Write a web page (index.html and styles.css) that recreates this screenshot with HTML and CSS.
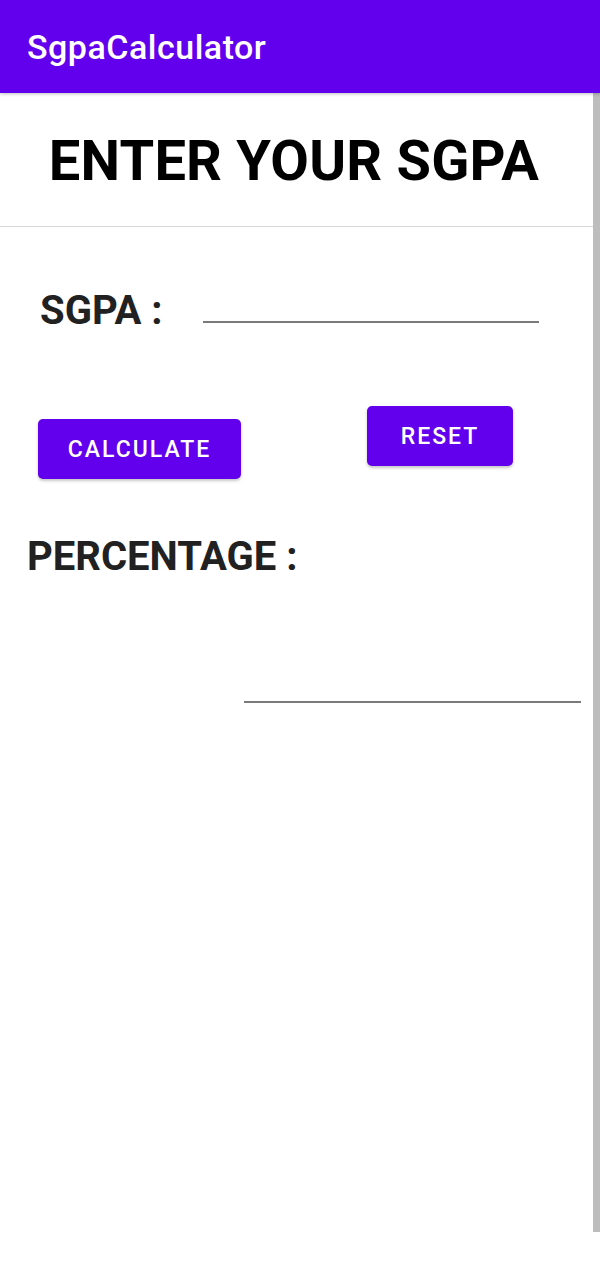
FILE: index.html
```html
<!DOCTYPE html>
<html lang="en">
<head>
<meta charset="utf-8">
<title>SgpaCalculator</title>
<link rel="stylesheet" href="styles.css">
</head>
<body>
<div class="screen">
  <header class="appbar">
    <h1 class="appbar-title">SgpaCalculator</h1>
  </header>
  <main class="content">
    <div class="scrollbar"></div>
    <section class="heading">
      <h2 class="heading-text">ENTER YOUR SGPA</h2>
    </section>
    <div class="sgpa-row">
      <label class="label">SGPA :</label>
      <div class="field"></div>
    </div>
    <div class="button-row">
      <button class="btn btn-calc">CALCULATE</button>
      <button class="btn btn-reset">RESET</button>
    </div>
    <div class="label label-percent">PERCENTAGE :</div>
    <div class="result"></div>
  </main>
</div>
</body>
</html>
```

FILE: styles.css
```css
* { box-sizing: border-box; }
html, body {
  margin: 0;
  padding: 0;
  background: #ffffff;
}
body {
  font-family: Roboto, "Liberation Sans", sans-serif;
  width: 600px;
  height: 1280px;
  overflow: hidden;
}
.screen {
  width: 600px;
  height: 1280px;
  display: flex;
  flex-direction: column;
}
.appbar {
  height: 93px;
  background: #6200ee;
  display: flex;
  align-items: center;
  padding-left: 27px;
  box-shadow: 0 1px 3px rgba(0, 0, 0, 0.25);
  position: relative;
  z-index: 2;
}
.appbar-title {
  margin: 0;
  color: #ffffff;
  font-size: 34px;
  font-weight: 500;
  line-height: 34px;
  letter-spacing: 0.5px;
}
.content {
  position: relative;
  flex: 1;
}
.scrollbar {
  position: absolute;
  top: 0;
  right: 0;
  width: 7px;
  height: 1139px;
  background: #bdbdbd;
  z-index: 1;
}
.heading {
  height: 134px;
  border-bottom: 1px solid #d9d9d9;
  padding-top: 40px;
  padding-right: 12px;
  text-align: center;
}
.heading-text {
  margin: 0;
  font-size: 56px;
  font-weight: 700;
  line-height: 56px;
  letter-spacing: 0.2px;
  color: #000000;
}
.sgpa-row {
  display: flex;
  align-items: flex-start;
  margin-top: 64px;
  padding-left: 40px;
}
.label {
  font-size: 40px;
  font-weight: 700;
  line-height: 40px;
  color: #212121;
}
.field {
  width: 336px;
  height: 32px;
  margin-left: 40px;
  border-bottom: 2px solid #7a7a7a;
}
.button-row {
  display: flex;
  align-items: flex-start;
  margin-top: 75px;
  padding-left: 38px;
}
.btn {
  border: none;
  background: #6200ee;
  color: #ffffff;
  font-family: Roboto, "Liberation Sans", sans-serif;
  font-size: 23px;
  font-weight: 500;
  letter-spacing: 2px;
  height: 60px;
  border-radius: 5px;
  box-shadow: 0 2px 3px rgba(0, 0, 0, 0.22);
  padding: 0;
}
.btn-calc {
  width: 203px;
  margin-top: 13px;
}
.btn-reset {
  width: 146px;
  margin-left: 126px;
}
.label-percent {
  margin-top: 58px;
  padding-left: 27px;
}
.result {
  width: 337px;
  height: 126px;
  margin-left: 244px;
  border-bottom: 2px solid #7a7a7a;
}
```
